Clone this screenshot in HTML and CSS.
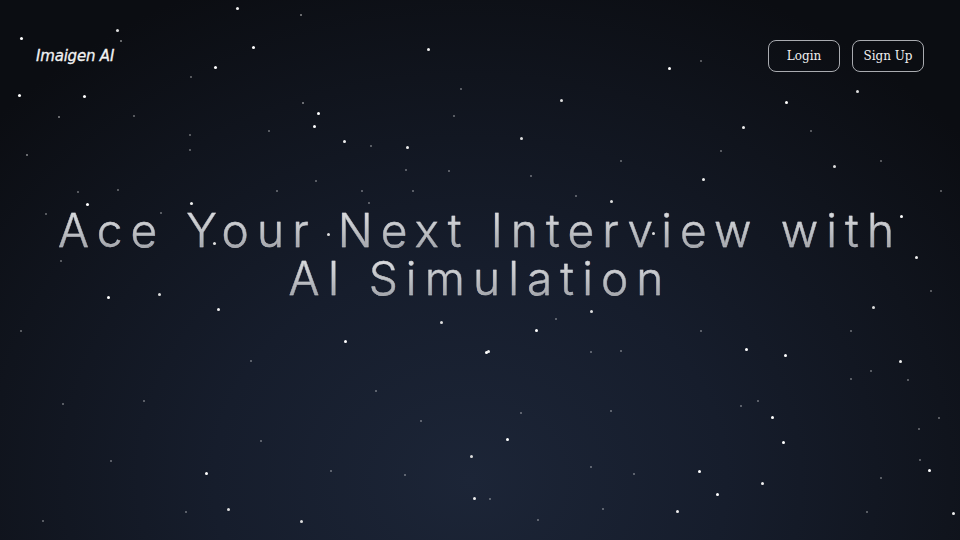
FILE: index.html
```html
<!DOCTYPE html>
<html lang="en">
<head>
<meta charset="utf-8">
<title>Imaigen AI</title>
<link rel="stylesheet" href="styles.css">
</head>
<body>
<div class="page">
  <div class="sky">
    <span class="stars-big"></span>
    <span class="stars-small"></span>
  </div>
  <header class="topbar">
    <div class="logo">Imaigen AI</div>
    <nav class="actions">
      <button class="btn">Login</button>
      <button class="btn">Sign Up</button>
    </nav>
  </header>
  <main class="hero">
    <h1 class="headline">Ace Your Next Interview with<br>AI Simulation</h1>
  </main>
</div>
</body>
</html>
```
FILE: styles.css
```css
* { box-sizing: border-box; }
html, body { margin: 0; padding: 0; }
body { width: 960px; height: 540px; overflow: hidden; background: #0b0d12; }

.page {
  position: relative;
  width: 960px;
  height: 540px;
  overflow: hidden;
  background: radial-gradient(ellipse 640px 540px at 470px 480px, #1c2537 0%, #161d2c 40%, #10141d 75%, #0b0d12 100%);
  display: flex;
  flex-direction: column;
}

.sky { position: absolute; inset: 0; pointer-events: none; }
.stars-big, .stars-small {
  position: absolute;
  left: 0; top: 0;
  border-radius: 50%;
  background: transparent;
}
.stars-big {
  width: 3px; height: 3px;
  box-shadow:
    20px 37px #fff, 116px 29px #ddd, 236px 7px #eee, 252px 46px #fff, 214px 66px #fff,
    427px 48px #eee, 18px 94px #fff, 83px 95px #fff, 317px 112px #fff, 313px 125px #fff,
    343px 140px #eee, 406px 146px #eee, 86px 203px #fff, 190px 202px #eee, 327px 233px #ddd,
    213px 242px #ddd, 535px 329px #fff, 485px 351px #fff, 745px 348px #fff, 784px 354px #fff,
    899px 360px #eee, 771px 416px #fff, 782px 441px #fff, 506px 438px #fff, 698px 470px #fff,
    761px 482px #eee, 716px 493px #fff, 928px 469px #fff, 676px 510px #eee, 952px 512px #eee,
    590px 310px #ddd, 668px 67px #fff, 785px 101px #fff, 856px 90px #ddd, 742px 126px #eee,
    560px 99px #ddd, 520px 137px #ddd, 900px 215px #fff, 915px 256px #eee, 872px 306px #ddd,
    344px 340px #fff, 217px 308px #eee, 158px 293px #ddd, 107px 296px #fff, 205px 472px #fff,
    227px 508px #ddd, 473px 497px #eee, 470px 455px #ddd, 440px 321px #ddd, 487px 350px #eee,
    300px 520px #ddd, 610px 200px #ddd, 702px 178px #eee, 833px 165px #ddd, 652px 232px #ddd;
}
.stars-small {
  width: 2px; height: 2px;
  box-shadow:
    120px 40px rgba(255,255,255,.5), 300px 14px rgba(255,255,255,.5), 190px 76px rgba(255,255,255,.4),
    58px 116px rgba(255,255,255,.5), 133px 115px rgba(255,255,255,.4), 189px 134px rgba(255,255,255,.4),
    189px 149px rgba(255,255,255,.4), 26px 154px rgba(255,255,255,.5), 268px 130px rgba(255,255,255,.4),
    302px 102px rgba(255,255,255,.5), 370px 145px rgba(255,255,255,.4), 453px 115px rgba(255,255,255,.4),
    460px 88px rgba(255,255,255,.4), 448px 170px rgba(255,255,255,.4), 405px 169px rgba(255,255,255,.4),
    412px 190px rgba(255,255,255,.4), 361px 190px rgba(255,255,255,.4), 315px 180px rgba(255,255,255,.4),
    276px 190px rgba(255,255,255,.4), 117px 189px rgba(255,255,255,.4), 77px 191px rgba(255,255,255,.4),
    160px 212px rgba(255,255,255,.4), 45px 213px rgba(255,255,255,.4), 368px 202px rgba(255,255,255,.4),
    530px 175px rgba(255,255,255,.4), 575px 195px rgba(255,255,255,.4), 620px 160px rgba(255,255,255,.4),
    700px 60px rgba(255,255,255,.4), 720px 150px rgba(255,255,255,.4), 810px 130px rgba(255,255,255,.4),
    880px 160px rgba(255,255,255,.4), 940px 190px rgba(255,255,255,.4), 930px 290px rgba(255,255,255,.4),
    850px 330px rgba(255,255,255,.4), 700px 330px rgba(255,255,255,.4), 620px 350px rgba(255,255,255,.4),
    555px 318px rgba(255,255,255,.4), 590px 351px rgba(255,255,255,.4), 520px 412px rgba(255,255,255,.4),
    610px 410px rgba(255,255,255,.4), 740px 405px rgba(255,255,255,.4), 757px 400px rgba(255,255,255,.4),
    850px 378px rgba(255,255,255,.4), 870px 370px rgba(255,255,255,.4), 907px 379px rgba(255,255,255,.4),
    938px 417px rgba(255,255,255,.4), 918px 428px rgba(255,255,255,.4), 919px 459px rgba(255,255,255,.4),
    880px 477px rgba(255,255,255,.4), 866px 511px rgba(255,255,255,.4), 590px 466px rgba(255,255,255,.4),
    633px 473px rgba(255,255,255,.4), 602px 508px rgba(255,255,255,.4), 537px 519px rgba(255,255,255,.4),
    489px 498px rgba(255,255,255,.4), 62px 403px rgba(255,255,255,.4), 143px 400px rgba(255,255,255,.4),
    375px 390px rgba(255,255,255,.4), 42px 520px rgba(255,255,255,.4), 185px 511px rgba(255,255,255,.4),
    404px 474px rgba(255,255,255,.4), 260px 440px rgba(255,255,255,.4), 330px 470px rgba(255,255,255,.4),
    110px 460px rgba(255,255,255,.4), 20px 330px rgba(255,255,255,.4), 60px 260px rgba(255,255,255,.4),
    250px 360px rgba(255,255,255,.4), 420px 420px rgba(255,255,255,.4);
}

.topbar {
  position: relative;
  z-index: 1;
  display: flex;
  align-items: center;
  justify-content: space-between;
  padding: 40px 36px 0 36px;
  height: 72px;
}
.logo {
  font-family: "DejaVu Sans", sans-serif;
  font-style: italic;
  font-size: 15px;
  color: #f2f2f2;
  letter-spacing: -0.2px;
  -webkit-text-stroke: 0.3px #f2f2f2;
}
.actions { display: flex; gap: 12px; }
.btn {
  width: 72px;
  height: 32px;
  border: 1px solid #a9abb0;
  border-radius: 8px;
  background: transparent;
  color: #f0f0f0;
  font-family: "DejaVu Serif", "Liberation Serif", serif;
  font-size: 12px;
  padding: 0;
  cursor: pointer;
}

.hero {
  position: relative;
  z-index: 1;
  flex: 1;
  display: flex;
  justify-content: center;
  padding-top: 134px;
}
.headline {
  margin: 0;
  text-align: center;
  font-family: "Inter", "Open Sans", sans-serif;
  font-weight: 300;
  font-size: 46px;
  line-height: 48px;
  letter-spacing: 8.1px;
  background: linear-gradient(180deg, #e2e3e6 0%, #c4c6ca 45%, #9a9ca2 100%);
  -webkit-background-clip: text;
  background-clip: text;
  color: transparent;
  background-size: 100% 48px;
  -webkit-text-stroke: 0.4px rgba(210,212,216,0.6);
}
```
